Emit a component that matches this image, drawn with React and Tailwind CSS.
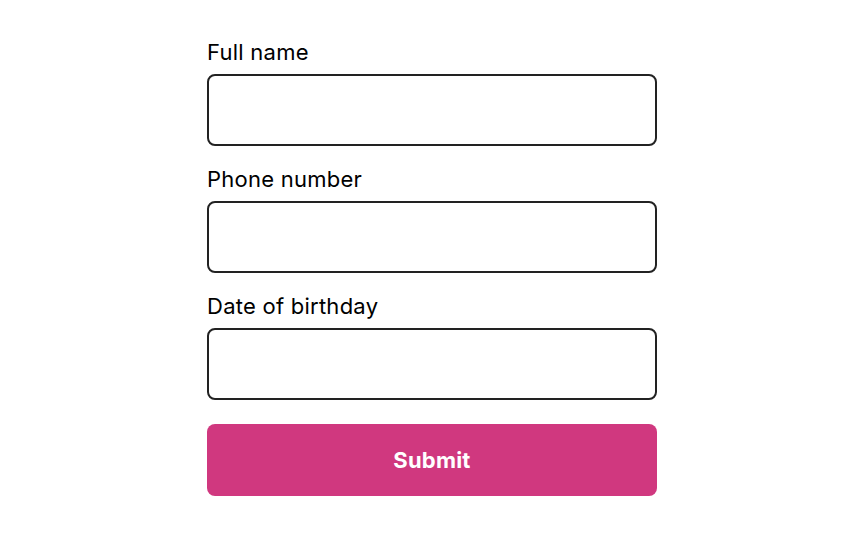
import React, { useState } from "react";

function Field({ label, value, onChange }) {
  return (
    <label className="flex flex-col">
      <span className="text-[22px] leading-[26px] tracking-[0.25px] text-black">{label}</span>
      <input
        type="text"
        value={value}
        onChange={(e) => onChange(e.target.value)}
        className="mt-[9px] h-[72px] w-full rounded-lg border-2 border-[#222] bg-white px-4 text-[20px] outline-none"
      />
    </label>
  );
}

export default function App() {
  const [name, setName] = useState("");
  const [phone, setPhone] = useState("");
  const [birthday, setBirthday] = useState("");

  return (
    <div
      className="min-h-screen w-full bg-white flex justify-center pt-[39px]"
      style={{ fontFamily: "Inter, 'Noto Sans', sans-serif" }}
    >
      <form
        className="w-[450px] flex flex-col gap-5"
        onSubmit={(e) => e.preventDefault()}
      >
        <Field label="Full name" value={name} onChange={setName} />
        <Field label="Phone number" value={phone} onChange={setPhone} />
        <Field label="Date of birthday" value={birthday} onChange={setBirthday} />
        <button
          type="submit"
          className="mt-1 h-[72px] w-full rounded-lg bg-[#d0387f] text-[22px] font-bold tracking-[0.2px] text-white"
        >
          Submit
        </button>
      </form>
    </div>
  );
}
